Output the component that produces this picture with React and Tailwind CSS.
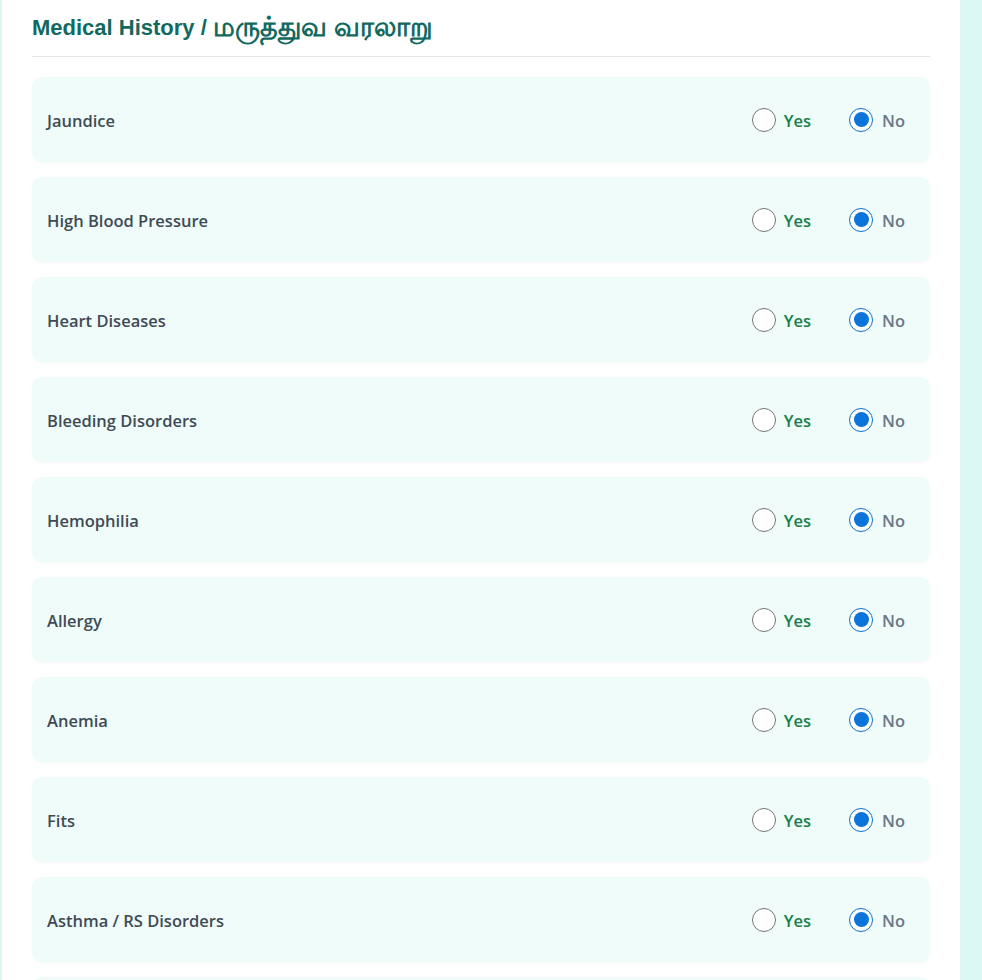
import React, { useState } from 'react';

const conditions = [
  'Jaundice',
  'High Blood Pressure',
  'Heart Diseases',
  'Bleeding Disorders',
  'Hemophilia',
  'Allergy',
  'Anemia',
  'Fits',
  'Asthma / RS Disorders',
  'Diabetes',
];

const Radio = ({ checked }) => (
  <span
    className={`flex h-6 w-6 items-center justify-center rounded-full border bg-white ${
      checked ? 'border-[#0a6fd0]' : 'border-[#767676]'
    }`}
  >
    {checked && <span className="h-[15px] w-[15px] rounded-full bg-[#0a74da]" />}
  </span>
);

const HistoryRow = ({ label, value, onChange }) => (
  <div className="flex h-[85px] items-center justify-between rounded-[10px] bg-[#effcf9] pl-[15px] pr-[25px] shadow-[0_1px_3px_rgba(0,0,0,0.03)]">
    <span className="pt-[3px] text-[16.5px] font-semibold text-[#3f4a55]">{label}</span>
    <div className="flex items-center gap-[38px]">
      <button onClick={() => onChange('yes')} className="flex items-center gap-[8px]">
        <Radio checked={value === 'yes'} />
        <span className="pt-[3px] text-[16.5px] font-semibold text-[#17804a]">Yes</span>
      </button>
      <button onClick={() => onChange('no')} className="flex items-center gap-[9px]">
        <Radio checked={value === 'no'} />
        <span className="pt-[3px] text-[16.5px] font-semibold text-[#6b7785]">No</span>
      </button>
    </div>
  </div>
);

export default function App() {
  const [answers, setAnswers] = useState(
    Object.fromEntries(conditions.map((c) => [c, 'no']))
  );

  return (
    <div
      className="flex min-h-screen bg-[#dcf8f2] pl-[2px]"
      style={{ fontFamily: '"Open Sans", "Noto Sans", sans-serif' }}
    >
      <div className="w-[958px] bg-white px-[30px] pt-[11px] pb-10">
        <h2
          className="flex h-[46px] items-center border-b border-[#e2e6ea] pb-[12px] text-[22px] font-bold leading-none text-[#12695f]"
          style={{ fontFamily: '"Liberation Sans", "Noto Sans", sans-serif' }}
        >
          <span>Medical History /&nbsp;</span>
          <span className="text-[27px] font-bold">மருத்துவ வரலாறு</span>
        </h2>
        <div className="mt-[20px] flex flex-col gap-[15px]">
          {conditions.map((c) => (
            <HistoryRow
              key={c}
              label={c}
              value={answers[c]}
              onChange={(v) => setAnswers({ ...answers, [c]: v })}
            />
          ))}
        </div>
      </div>
    </div>
  );
}
